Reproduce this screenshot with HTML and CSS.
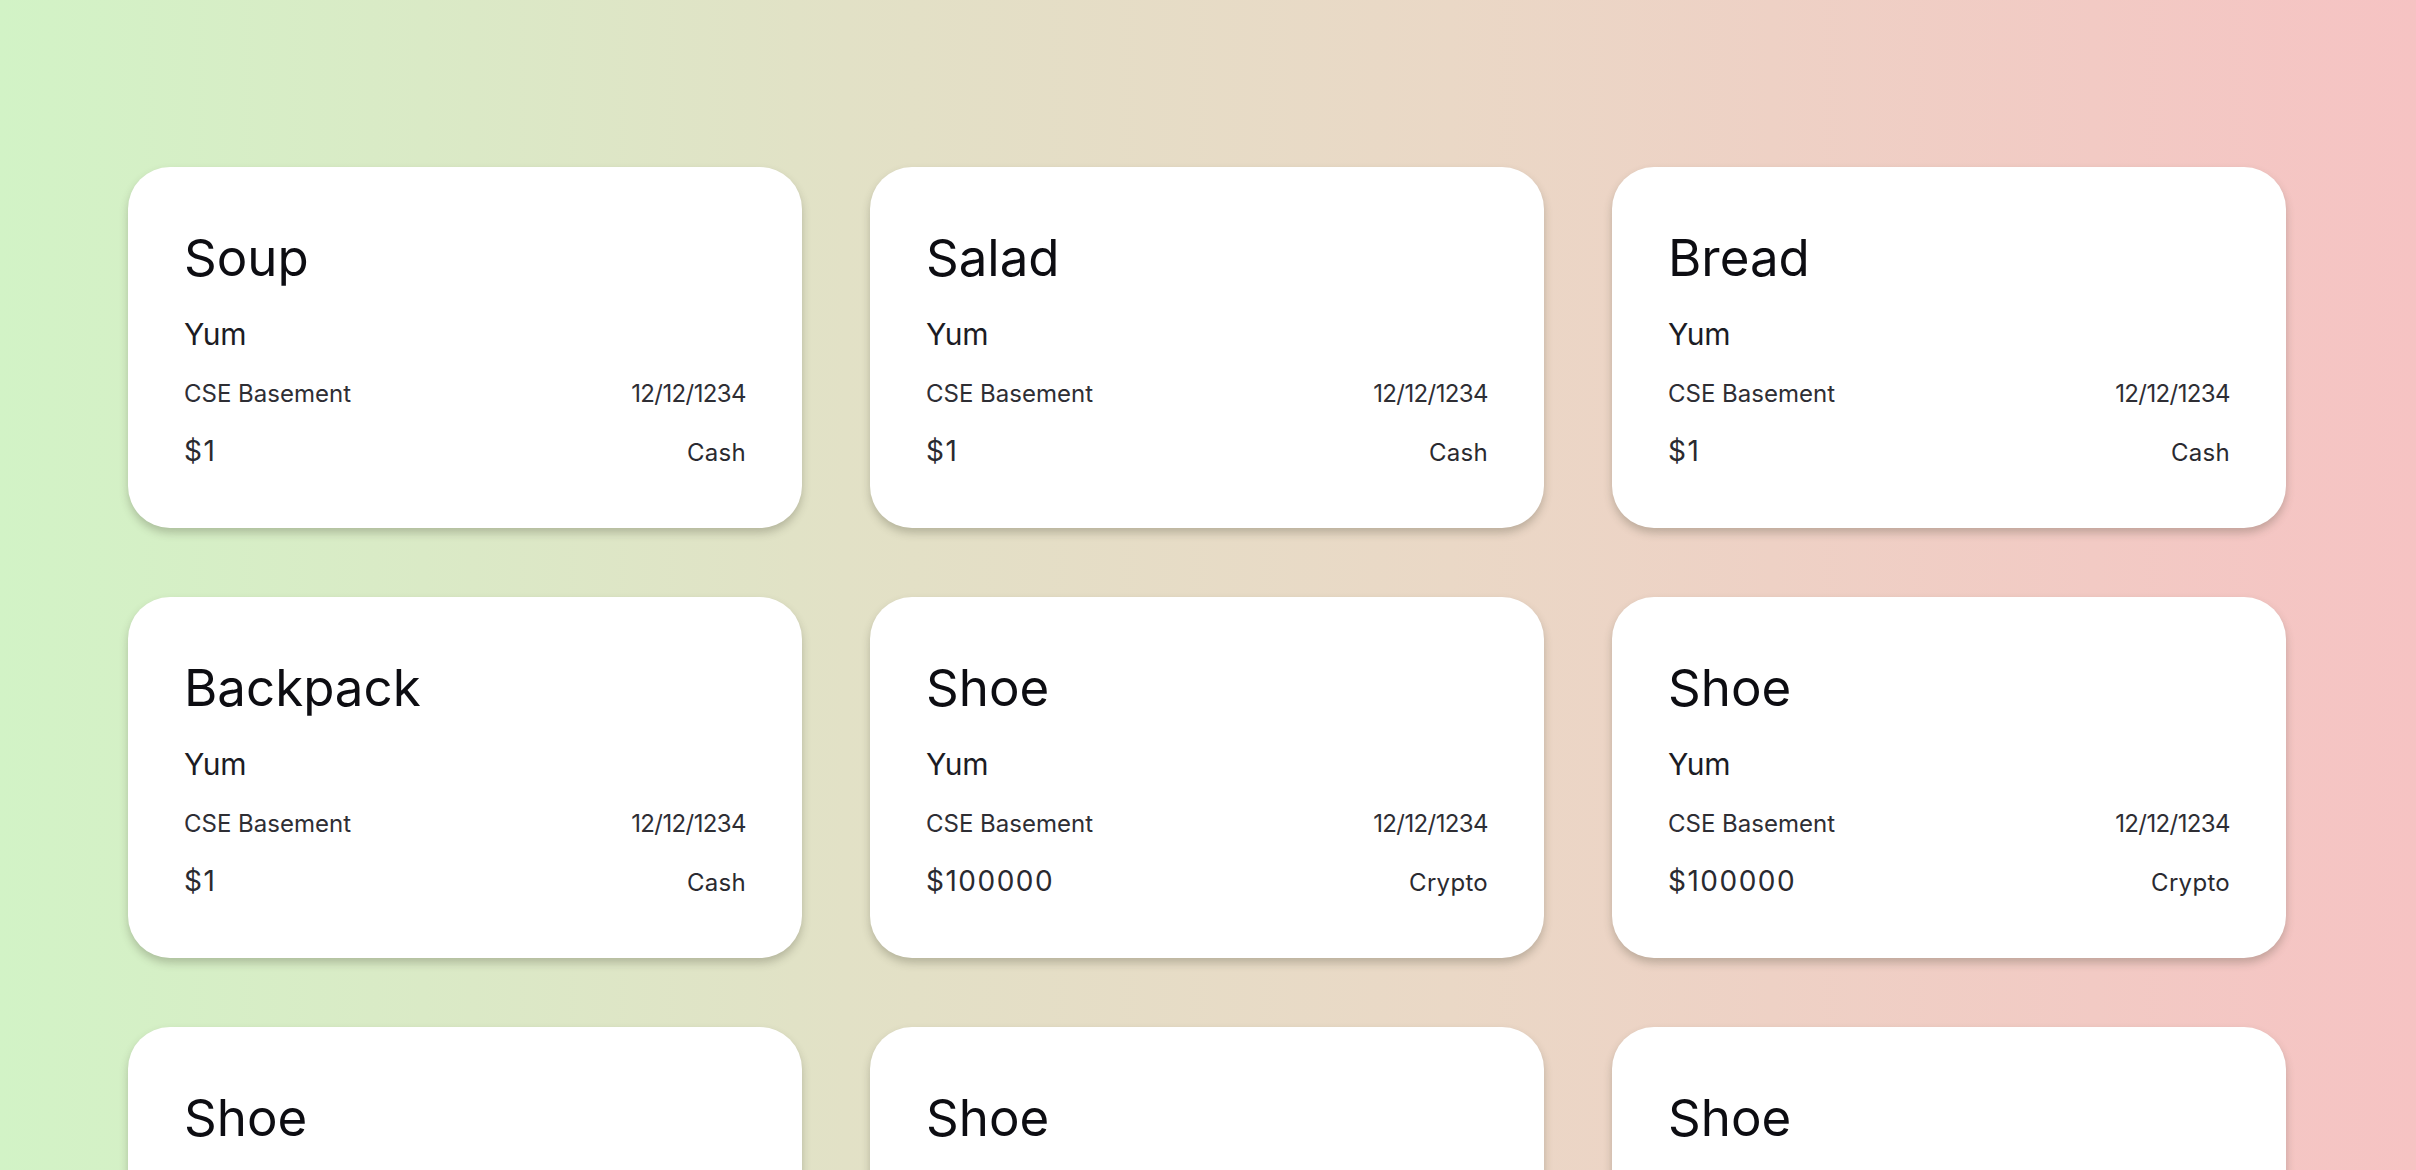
FILE: index.html
```html
<!DOCTYPE html>
<html lang="en">
<head>
<meta charset="utf-8">
<title>Listings</title>
<link rel="stylesheet" href="styles.css">
</head>
<body>
<main class="grid">
  <article class="card">
    <h2 class="title">Soup</h2>
    <p class="desc">Yum</p>
    <div class="row meta"><span>CSE Basement</span><span class="date">12/12/1234</span></div>
    <div class="row price"><span class="amount">$1</span><span class="method">Cash</span></div>
  </article>
  <article class="card">
    <h2 class="title">Salad</h2>
    <p class="desc">Yum</p>
    <div class="row meta"><span>CSE Basement</span><span class="date">12/12/1234</span></div>
    <div class="row price"><span class="amount">$1</span><span class="method">Cash</span></div>
  </article>
  <article class="card">
    <h2 class="title">Bread</h2>
    <p class="desc">Yum</p>
    <div class="row meta"><span>CSE Basement</span><span class="date">12/12/1234</span></div>
    <div class="row price"><span class="amount">$1</span><span class="method">Cash</span></div>
  </article>
  <article class="card">
    <h2 class="title">Backpack</h2>
    <p class="desc">Yum</p>
    <div class="row meta"><span>CSE Basement</span><span class="date">12/12/1234</span></div>
    <div class="row price"><span class="amount">$1</span><span class="method">Cash</span></div>
  </article>
  <article class="card">
    <h2 class="title">Shoe</h2>
    <p class="desc">Yum</p>
    <div class="row meta"><span>CSE Basement</span><span class="date">12/12/1234</span></div>
    <div class="row price"><span class="amount">$100000</span><span class="method">Crypto</span></div>
  </article>
  <article class="card">
    <h2 class="title">Shoe</h2>
    <p class="desc">Yum</p>
    <div class="row meta"><span>CSE Basement</span><span class="date">12/12/1234</span></div>
    <div class="row price"><span class="amount">$100000</span><span class="method">Crypto</span></div>
  </article>
  <article class="card">
    <h2 class="title">Shoe</h2>
    <p class="desc">Yum</p>
    <div class="row meta"><span>CSE Basement</span><span class="date">12/12/1234</span></div>
    <div class="row price"><span class="amount">$100000</span><span class="method">Crypto</span></div>
  </article>
  <article class="card">
    <h2 class="title">Shoe</h2>
    <p class="desc">Yum</p>
    <div class="row meta"><span>CSE Basement</span><span class="date">12/12/1234</span></div>
    <div class="row price"><span class="amount">$100000</span><span class="method">Crypto</span></div>
  </article>
  <article class="card">
    <h2 class="title">Shoe</h2>
    <p class="desc">Yum</p>
    <div class="row meta"><span>CSE Basement</span><span class="date">12/12/1234</span></div>
    <div class="row price"><span class="amount">$100000</span><span class="method">Crypto</span></div>
  </article>
</main>
</body>
</html>
```

FILE: styles.css
```css
html {
  background: linear-gradient(90deg, #d2f3c6 0%, #e2e1c6 35%, #ead8c6 60%, #f6c3c3 100%);
  background-attachment: fixed;
  min-height: 100%;
}

body {
  margin: 0;
  font-family: Inter, "Liberation Sans", sans-serif;
  color: #1a1a1a;
}

.grid {
  display: grid;
  grid-template-columns: repeat(3, 674px);
  column-gap: 68px;
  row-gap: 69px;
  justify-content: center;
  padding: 167px 2px 40px 0;
}

.card {
  background: #ffffff;
  border-radius: 42px;
  height: 361px;
  box-sizing: border-box;
  padding: 62px 56px 0;
  box-shadow: 0 5px 9px rgba(70, 70, 50, 0.28);
}

.title {
  margin: 0;
  font-size: 51px;
  line-height: 58px;
  font-weight: 400;
  color: #0d0d12;
  letter-spacing: 0;
}

.desc {
  margin: 29px 0 0;
  font-size: 30px;
  line-height: 36px;
  color: #1c1c24;
  letter-spacing: -0.3px;
}

.row {
  display: flex;
  justify-content: space-between;
  align-items: baseline;
}

.meta {
  margin-top: 27px;
  font-size: 24px;
  line-height: 30px;
  color: #2e2e34;
  letter-spacing: 0;
}

.date {
  letter-spacing: -0.6px;
}

.price {
  margin-top: 25px;
  line-height: 34px;
  color: #2a2a30;
}

.amount {
  font-size: 28px;
  letter-spacing: 1.5px;
}

.method {
  font-size: 24px;
  letter-spacing: 0.3px;
}
```
